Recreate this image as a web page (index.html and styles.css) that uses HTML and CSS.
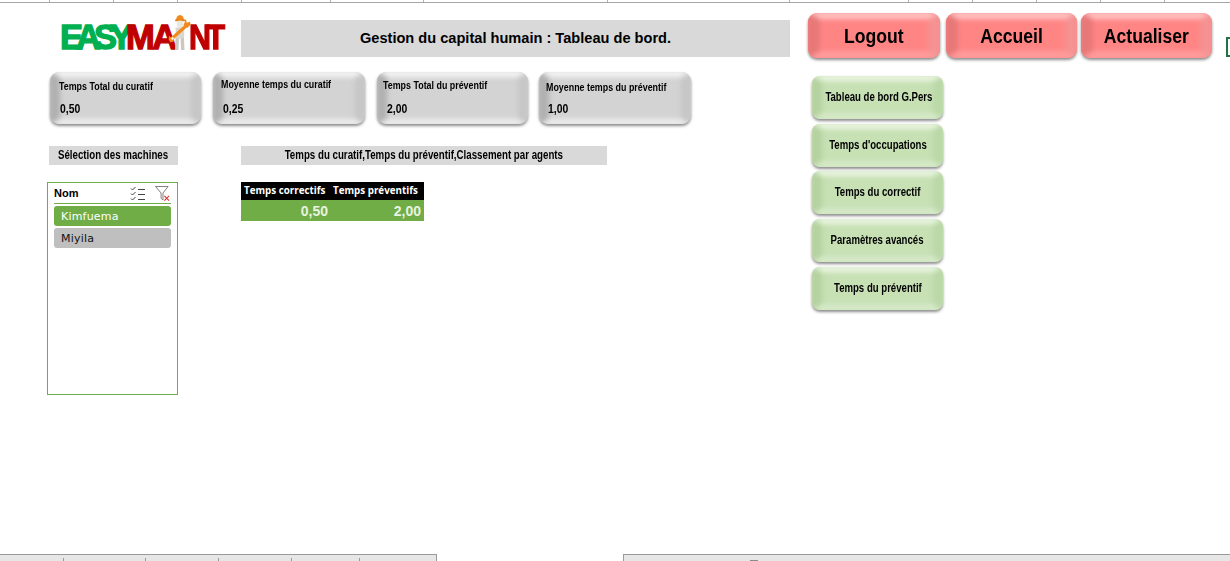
FILE: index.html
```html
<!DOCTYPE html>
<html lang="fr">
<head>
<meta charset="utf-8">
<title>Gestion du capital humain</title>
<link rel="stylesheet" href="styles.css">
</head>
<body>
<div class="ruler">
  <i class="tick w49"></i><i class="tick w64"></i><i class="tick w64"></i><i class="tick w64"></i><i class="tick w89"></i><i class="tick w93"></i><i class="tick w184"></i><i class="tick w182"></i><i class="tick w119"></i><i class="tick w64"></i><i class="tick w64"></i><i class="tick w64"></i><i class="tick w64"></i>
</div>
<main class="sheet">
  <section class="left">
    <header class="head">
      <div class="logo">
        <span class="logo-green">EASY</span><span class="logo-red logo-ma">MA</span>
        <svg class="worker" viewBox="0 0 24 36" width="24" height="36" aria-hidden="true">
          <path d="M9 6.500a4 5.500 0 0 1 8 0z" fill="#f08a1e"/>
          <rect x="8" y="5.500" width="11" height="1.800" rx=".8" fill="#e87f12"/>
          <circle cx="13" cy="10" r="3.400" fill="#e9e7e1"/>
          <path d="M8.500 13.500h9l-.5 11h-8z" fill="#d9d7d0"/>
          <path d="M8.500 24h3.500l-.5 12H8zM13.500 24H17l.5 12h-3.500z" fill="#cbc9c2"/>
          <path d="M5 24.500 20 11" stroke="#f08a1e" stroke-width="3.200"/>
          <path d="M19 5.500l.8 3.200 3.200-1.200.5 3.500-3.500 3-3.500-3z" fill="#f08a1e"/>
          <path d="M2 21.500l5.500 5.500-4 1.500-1.800-3z" fill="#f08a1e"/>
          <circle cx="5.500" cy="24.500" r="1.200" fill="#fff"/>
        </svg>
        <span class="logo-red logo-nt">NT</span>
      </div>
      <h1 class="title">Gestion du capital humain : Tableau de bord.</h1>
    </header>
    <div class="kpis">
      <div class="bevel card c1"><span class="cond card-label">Temps Total du curatif</span><span class="cond card-value">0,50</span></div>
      <div class="bevel card c2"><span class="cond card-label">Moyenne temps du curatif</span><span class="cond card-value">0,25</span></div>
      <div class="bevel card c3"><span class="cond card-label">Temps Total du préventif</span><span class="cond card-value">2,00</span></div>
      <div class="bevel card c4"><span class="cond card-label">Moyenne temps du préventif</span><span class="cond card-value">1,00</span></div>
    </div>
    <div class="lower">
      <div class="col-slicer">
        <div class="label label-a"><span class="cond">Sélection des machines</span></div>
        <div class="slicer">
          <div class="slicer-head">
            <span class="slicer-name">Nom</span>
            <svg class="ico-multi" viewBox="0 0 16 15" width="16" height="15" aria-hidden="true">
              <path d="M1 2.500l1.500 1.500L5.500 1M1 7.500L2.500 9l3-3M1 12.500L2.500 14l3-3" fill="none" stroke="#444" stroke-width="1"/>
              <path d="M8 3.500h7M8 8.500h7M8 13.500h7" stroke="#444" stroke-width="1"/>
            </svg>
            <svg class="ico-filter" viewBox="0 0 16 16" width="15" height="15" aria-hidden="true">
              <path d="M.5 .5h13.500L8.500 7.500V15L6.500 13V7.500z" fill="none" stroke="#777" stroke-width="1"/>
              <path d="M10 10.500l5 5M15 10.500l-5 5" stroke="#d8342c" stroke-width="1.200"/>
            </svg>
          </div>
          <div class="item item-on">Kimfuema</div>
          <div class="item item-off">Miyila</div>
        </div>
      </div>
      <div class="col-table">
        <div class="label label-b"><span class="cond">Temps du curatif,Temps du préventif,Classement par agents</span></div>
        <table class="pivot">
          <thead><tr><th>Temps correctifs</th><th>Temps préventifs</th></tr></thead>
          <tbody><tr><td>0,50</td><td>2,00</td></tr></tbody>
        </table>
      </div>
    </div>
  </section>
  <aside class="right">
    <div class="top-btns">
      <button class="bevel red b1"><span class="cond">Logout</span></button>
      <button class="bevel red b2"><span class="cond">Accueil</span></button>
      <button class="bevel red b3"><span class="cond">Actualiser</span></button>
      <i class="cell-cursor"></i>
    </div>
    <nav class="side">
      <button class="bevel green"><span class="cond">Tableau de bord G.Pers</span></button>
      <button class="bevel green"><span class="cond">Temps d'occupations</span></button>
      <button class="bevel green"><span class="cond">Temps du correctif</span></button>
      <button class="bevel green"><span class="cond">Paramètres avancés</span></button>
      <button class="bevel green"><span class="cond">Temps du préventif</span></button>
    </nav>
  </aside>
</main>
<footer class="foot">
  <div class="tabs"><i class="tab-a"></i><i class="tab-b"></i><i class="tab-b"></i><i class="tab-c"></i><i class="tab-d"></i></div>
  <div class="scroll"><i class="thumb"></i></div>
</footer>
</body>
</html>
```
FILE: styles.css
```css
* { box-sizing: border-box; }
html, body { margin: 0; height: 561px; overflow: hidden; background: #fff; }
body { display: flex; flex-direction: column; font-family: "Liberation Sans", Arial, sans-serif; color: #000; }

.ruler { height: 3px; flex: none; display: flex; border-bottom: 1px solid #a6a6a6; }
.tick { border-right: 1px solid #b0b0b0; flex: none; }
.w49 { width: 50px; } .w64 { width: 64px; } .w89 { width: 89px; } .w93 { width: 93px; }
.w184 { width: 184px; } .w182 { width: 182px; } .w119 { width: 119px; }

.sheet { flex: 1; display: flex; min-height: 0; }
.left { width: 808px; flex: none; display: flex; flex-direction: column; }
.right { flex: 1; display: flex; flex-direction: column; }

.cond { display: inline-block; white-space: nowrap; transform-origin: center; }

.head { display: flex; padding: 11px 0 0 60px; height: 69px; align-items: flex-start; }
.logo { width: 166px; height: 36px; display: flex; align-items: flex-end; font-weight: 700; font-size: 34.500px; line-height: 25px; letter-spacing: -7px; white-space: nowrap; }
.logo span { -webkit-text-stroke: 1.300px currentColor; }
.logo-green { color: #00b050; }
.logo-red { color: #c00000; }
.logo-ma { letter-spacing: -2.500px; }
.logo-nt { letter-spacing: -5px; transform: scaleX(.88); transform-origin: left; }
.worker { margin: 0 -2px 0 -8px; flex: none; position: relative; z-index: 1; }
.title { margin: 6px 0 0 15px; width: 549px; height: 37px; background: #d9d9d9; font-size: 14.600px; font-weight: 700; line-height: 37px; text-align: center; }

.bevel {
  display: block;
  position: relative;
  overflow: hidden;
  border: 0;
  padding: 0;
  font-family: "Liberation Sans", Arial, sans-serif;
  font-weight: 700;
  color: #000;
  box-shadow: 0 2px 3px rgba(0,0,0,.45);
}
.bevel::before {
  content: "";
  position: absolute;
  inset: -1px;
  border-style: solid;
  filter: blur(2.500px);
}
.bevel > .cond { position: relative; }

.kpis { display: flex; padding-left: 50px; gap: 12px; }
.card {
  width: 151px; height: 52px;
  border-radius: 9px;
  background: #d3d3d3;
  display: flex; flex-direction: column; align-items: flex-start;
}
.card::before { border-width: 6px 11px 6px 11px; border-color: #f6f6f6 #c6c6c6 #eeeeee #b0b0b0; }
.c2, .c4 { width: 152px; }
.c4 { margin-left: -1px; }
.card-label { font-size: 11.700px; line-height: 14px; transform: scaleX(.76); transform-origin: left; margin: 7px 0 0 9px; }
.card-value { font-size: 13px; line-height: 15px; transform: scaleX(.8); transform-origin: left; margin: 8px 0 0 10px; }
.c2 .card-label { margin: 5px 0 0 8px; }
.c2 .card-value { margin: 10px 0 0 10px; }
.c3 .card-label { margin: 6px 0 0 6px; }
.c3 .card-value { margin: 9px 0 0 10px; }
.c4 .card-label { margin: 8px 0 0 7px; }
.c4 .card-value { margin: 7px 0 0 9px; }

.lower { display: flex; padding: 22px 0 0 47px; }
.col-slicer { width: 194px; flex: none; }
.label { height: 19px; background: #d9d9d9; font-size: 12px; font-weight: 700; line-height: 19px; text-align: center; white-space: nowrap; display: flex; justify-content: center; }
.label .cond { transform: scaleX(.81); }
.label-a { width: 129px; margin-left: 2px; }
.label-b { width: 366px; }

.slicer { margin-top: 17px; width: 131px; height: 213px; border: 1px solid #70ad47; padding: 0 6px; background: #fff; }
.slicer-head { height: 21px; border-bottom: 1px solid #70ad47; display: flex; align-items: center; }
.slicer-name { flex: 1; font-size: 11px; font-weight: 700; }
.ico-multi { margin-right: 9px; margin-left: -2px; }
.ico-filter { margin-right: 1px; }
.item { height: 20px; margin-top: 2px; border-radius: 3px; font-family: "DejaVu Sans", sans-serif; font-size: 11px; line-height: 22px; padding-left: 7px; letter-spacing: .2px; }
.item-on { background: #70ad47; color: #fff; }
.item-off { background: #bfbfbf; color: #111; }

.pivot { margin-top: 17px; width: 183px; border-collapse: collapse; table-layout: fixed; font-family: "Open Sans", sans-serif; }
.pivot th { background: #000; color: #fff; height: 18px; padding: 0 0 0 2px; font-size: 9.800px; font-weight: 700; line-height: 18px; white-space: nowrap; text-align: left; }
.pivot th:first-child { padding-left: 3px; }
.pivot td { background: #70ad47; color: #e8f3e0; height: 21px; padding: 0 3px 0 0; font-family: "Liberation Sans", sans-serif; font-size: 14px; font-weight: 700; text-align: right; }
.pivot th:first-child, .pivot td:first-child { width: 90px; }

.top-btns { display: flex; padding-top: 10px; height: 69px; position: relative; }
.red {
  height: 45px;
  border-radius: 9px;
  background: #ff8585;
  font-size: 20px; line-height: 46px;
}
.red::before { border-width: 7px 13px 8px 13px; border-color: #ffc4c4 #f59292 #ff9c9c #e87878; }
.red .cond { transform: scaleX(.88); }
.b1 { width: 132px; }
.b2 { width: 131px; margin-left: 6px; }
.b3 { width: 131px; margin-left: 4px; }
.cell-cursor { position: absolute; left: 418px; top: 34px; width: 6px; height: 20px; border: 2px solid #217346; border-right: 0; }

.side { display: flex; flex-direction: column; padding: 4px 0 0 4px; gap: 4.700px; }
.green {
  width: 131px; height: 43px;
  border-radius: 8px;
  background: #c7e0b4;
  font-size: 12px; line-height: 43px;
}
.green::before { border-width: 6px 11px 7px 11px; border-color: #ebf6e2 #bbd8a8 #d6e9c8 #b4d2a0; }
.green .cond { transform: scaleX(.8); }

.foot { height: 7px; flex: none; display: flex; justify-content: space-between; }
.tabs { width: 437px; border: solid #9a9a9a; border-width: 1px 1px 0 0; background: #e6e6e6; display: flex; padding: 3px 0 0 63px; }
.tabs i { border-left: 1px solid #999; flex: none; }
.tab-a { width: 82px; } .tab-b { width: 73px; } .tab-c { width: 68px; } .tab-d { width: 68px; }
.scroll { width: 607px; background: #e6e6e6; border: solid #9a9a9a; border-width: 1px 0 0 1px; padding: 5px 0 0 126px; }
.thumb { display: block; width: 8px; height: 1px; background: #8c8c8c; }
```
